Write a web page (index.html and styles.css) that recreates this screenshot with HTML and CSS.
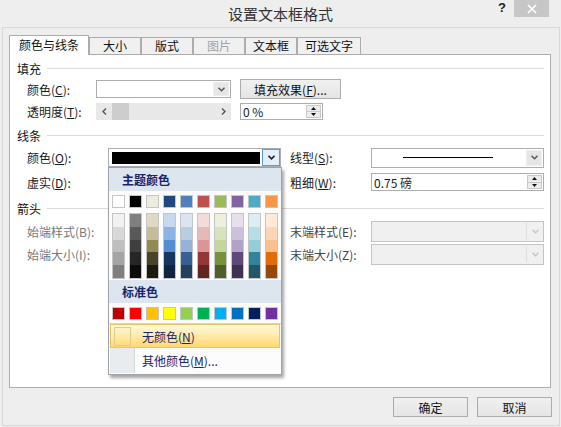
FILE: index.html
```html
<!DOCTYPE html>
<html lang="zh-CN">
<head>
    <meta charset="UTF-8">
    <title>设置文本框格式</title>
    <link rel="stylesheet" href="styles.css">
</head>
<body>
    <div class="titlebar">
        <div class="title">设置文本框格式</div>
        <div class="caption-btns">
            <span class="help">?</span>
            <span class="close">
                <svg width="10" height="10" viewBox="0 0 10 10"><path d="M1 1 L9 9 M9 1 L1 9" stroke="#fff" stroke-width="1.6"/></svg>
            </span>
        </div>
    </div>

    <div class="frame">
        <div class="tabs">
            <div class="tab active">颜色与线条</div>
            <div class="tab">大小</div>
            <div class="tab">版式</div>
            <div class="tab disabled">图片</div>
            <div class="tab">文本框</div>
            <div class="tab">可选文字</div>
        </div>

        <div class="panel">
            <div class="sec"><span>填充</span><i></i></div>
            <div class="row r1">
                <span class="lbl narrow">颜色(<u>C</u>):</span>
                <div class="combo fill-color">
                    <span class="val"></span>
                    <span class="drop"><svg width="7" height="5" viewBox="0 0 7 5"><path d="M0.5 0.8 L3.5 3.8 L6.5 0.8" fill="none" stroke="#555" stroke-width="1.5"/></svg></span>
                </div>
                <button class="btn fx">填充效果(<u>F</u>)...</button>
            </div>
            <div class="row r2">
                <span class="lbl narrow">透明度(<u>T</u>):</span>
                <div class="scroll">
                    <span class="arr"><svg width="5" height="7" viewBox="0 0 5 7"><path d="M4 0.5 L1 3.5 L4 6.5" fill="none" stroke="#555" stroke-width="1.4"/></svg></span>
                    <span class="thumb"></span>
                    <span class="track"></span>
                    <span class="arr"><svg width="5" height="7" viewBox="0 0 5 7"><path d="M1 0.5 L4 3.5 L1 6.5" fill="none" stroke="#555" stroke-width="1.4"/></svg></span>
                </div>
                <div class="spin pct">
                    <span class="val">0 %</span>
                    <span class="spin-btns">
                        <span><svg width="5" height="3" viewBox="0 0 5 3"><path d="M0 3 L2.5 0 L5 3Z" fill="#111"/></svg></span>
                        <span><svg width="5" height="3" viewBox="0 0 5 3"><path d="M0 0 L2.5 3 L5 0Z" fill="#111"/></svg></span>
                    </span>
                </div>
            </div>

            <div class="sec s2"><span>线条</span><i></i></div>
            <div class="row r3">
                <span class="lbl wide">颜色(<u>O</u>):</span>
                <div class="color-field">
                    <div class="combo line-color">
                        <span class="val"><b class="black"></b></span>
                        <span class="drop active"><svg width="7" height="5" viewBox="0 0 7 5"><path d="M0.5 0.8 L3.5 3.8 L6.5 0.8" fill="none" stroke="#222" stroke-width="1.6"/></svg></span>
                    </div>
                    <div class="popup">
                        <div class="pop-head">主题颜色</div>
                        <div class="swatches" id="theme-row"></div>
                        <div class="shades" id="theme-shades"></div>
                        <div class="pop-head std">标准色</div>
                        <div class="swatches std-row" id="std-row"></div>
                        <div class="pop-sep"></div>
                        <div class="pop-item hover"><span class="no-color"></span><span>无颜色(<u>N</u>)</span></div>
                        <div class="pop-item more"><span class="strip"></span><span>其他颜色(<u>M</u>)...</span></div>
                    </div>
                </div>
                <span class="lbl wide gap">线型(<u>S</u>):</span>
                <div class="combo line-style">
                    <span class="val"><b class="stroke"></b></span>
                    <span class="drop"><svg width="7" height="5" viewBox="0 0 7 5"><path d="M0.5 0.8 L3.5 3.8 L6.5 0.8" fill="none" stroke="#555" stroke-width="1.5"/></svg></span>
                </div>
            </div>
            <div class="row r4">
                <span class="lbl wide">虚实(<u>D</u>):</span>
                <div class="combo std-w"><span class="val"></span><span class="drop"></span></div>
                <span class="lbl wide gap">粗细(<u>W</u>):</span>
                <div class="spin std-w">
                    <span class="val">0.75 磅</span>
                    <span class="spin-btns">
                        <span><svg width="5" height="3" viewBox="0 0 5 3"><path d="M0 3 L2.5 0 L5 3Z" fill="#111"/></svg></span>
                        <span><svg width="5" height="3" viewBox="0 0 5 3"><path d="M0 0 L2.5 3 L5 0Z" fill="#111"/></svg></span>
                    </span>
                </div>
            </div>

            <div class="sec s3"><span>箭头</span><i></i></div>
            <div class="row r5">
                <span class="lbl wide off">始端样式(B):</span>
                <div class="combo std-w disabled"><span class="val"></span><span class="drop"></span></div>
                <span class="lbl wide gap off2">末端样式(E):</span>
                <div class="combo std-w disabled">
                    <span class="val"></span>
                    <span class="drop"><svg width="7" height="5" viewBox="0 0 7 5"><path d="M0.5 0.8 L3.5 3.8 L6.5 0.8" fill="none" stroke="#c4c4c4" stroke-width="1.4"/></svg></span>
                </div>
            </div>
            <div class="row r6">
                <span class="lbl wide off">始端大小(I):</span>
                <div class="combo std-w disabled"><span class="val"></span><span class="drop"></span></div>
                <span class="lbl wide gap off2">末端大小(Z):</span>
                <div class="combo std-w disabled">
                    <span class="val"></span>
                    <span class="drop"><svg width="7" height="5" viewBox="0 0 7 5"><path d="M0.5 0.8 L3.5 3.8 L6.5 0.8" fill="none" stroke="#c4c4c4" stroke-width="1.4"/></svg></span>
                </div>
            </div>
        </div>

        <div class="actions">
            <button class="btn">确定</button>
            <button class="btn">取消</button>
        </div>
    </div>

    <script>
        (function() {
            // base colour, then its five tints/shades
            var theme = [
                ['#ffffff', '#f2f2f2', '#d8d8d8', '#bfbfbf', '#a5a5a5', '#7f7f7f'],
                ['#000000', '#7f7f7f', '#595959', '#3f3f3f', '#262626', '#0c0c0c'],
                ['#eeece1', '#ddd9c3', '#c4bd97', '#938953', '#494429', '#1d1b10'],
                ['#1f497d', '#c6d9f0', '#8db3e2', '#548dd4', '#17365d', '#0f243e'],
                ['#4f81bd', '#dbe5f1', '#b8cce4', '#95b3d7', '#366092', '#244061'],
                ['#c0504d', '#f2dcdb', '#e5b9b7', '#d99694', '#953734', '#632423'],
                ['#9bbb59', '#ebf1dd', '#d7e3bc', '#c3d69b', '#76923c', '#4f6128'],
                ['#8064a2', '#e5e0ec', '#ccc1d9', '#b2a2c7', '#5f497a', '#3f3151'],
                ['#4bacc6', '#dbeef3', '#b7dde8', '#92cddc', '#31859b', '#205867'],
                ['#f79646', '#fdeada', '#fbd5b5', '#fac08f', '#e36c09', '#974806']
            ];
            var std = ['#c00000', '#ff0000', '#ffc000', '#ffff00', '#92d050',
                       '#00b050', '#00b0f0', '#0070c0', '#002060', '#7030a0'];

            var row = document.getElementById('theme-row');
            var shades = document.getElementById('theme-shades');
            var stdRow = document.getElementById('std-row');

            theme.forEach(function(c) {
                var sw = document.createElement('span');
                sw.className = 'sw';
                sw.style.background = c[0];
                row.appendChild(sw);

                var col = document.createElement('span');
                col.className = 'shade-col';
                for (var i = 1; i < c.length; i++) {
                    var cell = document.createElement('span');
                    cell.style.background = c[i];
                    col.appendChild(cell);
                }
                shades.appendChild(col);
            });

            std.forEach(function(c) {
                var sw = document.createElement('span');
                sw.className = 'sw';
                sw.style.background = c;
                stdRow.appendChild(sw);
            });
        })();
    </script>
</body>
</html>
```

FILE: styles.css
```css
* {
    margin: 0;
    padding: 0;
    box-sizing: border-box;
}

body {
    width: 561px;
    height: 427px;
    overflow: hidden;
    background: #eeeeee;
    font-family: "Noto Sans CJK SC", "Noto Sans", sans-serif;
    font-size: 12px;
    color: #1a1a1a;
}

u {
    text-decoration: underline;
    text-underline-offset: 1px;
}

/* title bar */
.titlebar {
    height: 27px;
    display: grid;
    grid-template-columns: 1fr auto 1fr;
}

.title {
    grid-column: 2;
    font-size: 15px;
    line-height: 27px;
    color: #333;
}

.caption-btns {
    grid-column: 3;
    display: flex;
    justify-content: flex-end;
    align-items: flex-start;
    padding-right: 12px;
}

.help {
    font-family: "Liberation Sans", sans-serif;
    font-weight: bold;
    font-size: 13px;
    line-height: 15px;
    margin-right: 8px;
    color: #222;
}

.close {
    width: 35px;
    height: 17px;
    background: #c7c7c7;
    display: flex;
    align-items: center;
    justify-content: center;
}

/* dialog body */
.frame {
    margin-left: 2px;
    width: 558px;
    height: 399px;
    border: 1px solid #d9d9d9;
    padding: 7px 0 0 6px;
}

.tabs {
    display: flex;
    align-items: flex-end;
    height: 19px;
    position: relative;
    z-index: 1;
}

.tab {
    height: 17px;
    min-width: 52px;
    padding: 0 7px;
    border: 1px solid #acacac;
    border-bottom: none;
    background: #f0f0f0;
    line-height: 15px;
    text-align: center;
    color: #111;
}

.tab + .tab {
    margin-left: 0;
}

.tab.active {
    height: 20px;
    padding: 0 9px;
    line-height: 18px;
    background: #fff;
    margin-bottom: -1px;
}

.tab.disabled {
    color: #a3a3a3;
}

.panel {
    width: 542px;
    height: 334px;
    border: 1px solid #acacac;
    background: #fff;
    padding: 5px 6px 0 7px;
}

.sec {
    display: flex;
    align-items: center;
    height: 16px;
    color: #111;
}

.sec i {
    flex: 1;
    height: 1px;
    background: #dcdcdc;
    margin-left: 6px;
}

.s2 { margin-top: 7px; }
.s3 { margin-top: 9px; }

.row {
    display: flex;
    align-items: center;
    padding-left: 10px;
}

.r1 { height: 20px; margin-top: 3px; }
.r2 { height: 17px; margin-top: 4px; }
.r3 { height: 19px; margin-top: 5px; }
.r4 { height: 18px; margin-top: 6px; }
.r5 { height: 21px; margin-top: 5px; }
.r6 { height: 21px; margin-top: 2px; }

.lbl {
    white-space: nowrap;
}

.narrow { width: 69px; }
.wide { width: 81px; }
.gap { margin-left: 9px; }
.off { color: #777; }
.off2 { color: #444; }

/* controls */
.combo {
    display: flex;
    height: 100%;
    border: 1px solid #abadb3;
    background: #fff;
}

.combo .val {
    flex: 1;
    display: flex;
    align-items: center;
}

.drop {
    width: 16px;
    margin: 1px;
    display: flex;
    align-items: center;
    justify-content: center;
    background: #e6e6e6;
    border: 1px solid #eeeeee;
}

.drop.active {
    background: #e3effb;
    border-color: #569de5;
    margin: 0;
    width: 18px;
}

.fill-color { width: 135px; height: 18px; }
.std-w { width: 173px; }

.combo.disabled {
    background: #f0f0f0;
    border-color: #c4c4c4;
}

.combo.disabled .drop {
    background: #f0f0f0;
    border: none;
    border-left: 1px solid #dedede;
    margin: 1px 0;
    width: 17px;
}

.color-field {
    position: relative;
    width: 173px;
    height: 100%;
}

.line-color {
    width: 173px;
}

.black {
    display: block;
    width: 148px;
    height: 12px;
    margin-left: 3px;
    background: #000;
}

.line-style {
    width: 173px;
    height: 20px;
}

.stroke {
    display: block;
    width: 90px;
    height: 1px;
    margin-left: 31px;
    background: #000;
}

.btn {
    font-family: inherit;
    font-size: 12px;
    color: #111;
    width: 75px;
    height: 20px;
    border: 1px solid #acacac;
    background: linear-gradient(#f0f0f0, #e5e5e5);
}

.fx {
    width: 101px;
    margin-left: 9px;
}

.scroll {
    width: 135px;
    height: 17px;
    display: flex;
    align-items: center;
    background: #e8e8e8;
}

.scroll .arr {
    width: 16px;
    display: flex;
    justify-content: center;
}

.scroll .thumb {
    width: 17px;
    height: 100%;
    background: #cdcdcd;
}

.scroll .track {
    flex: 1;
}

.spin {
    display: flex;
    height: 100%;
    border: 1px solid #abadb3;
    background: #fff;
}

.spin .val {
    flex: 1;
    padding-left: 2px;
    display: flex;
    align-items: center;
}

.pct {
    width: 83px;
    margin-left: 9px;
}

.spin-btns {
    width: 15px;
    margin: 1px;
    display: flex;
    flex-direction: column;
}

.spin-btns span {
    flex: 1;
    display: flex;
    align-items: center;
    justify-content: center;
    background: #ececec;
    border: 1px solid #c9c9c9;
}

.spin-btns span + span {
    border-top: none;
}

/* colour drop-down */
.popup {
    position: absolute;
    top: 100%;
    left: 0;
    width: 174px;
    height: 208px;
    background: #fcfcfc;
    border: 1px solid #9ea3a8;
    box-shadow: 2px 3px 3px rgba(0, 0, 0, 0.35);
    z-index: 5;
}

.pop-head {
    height: 23px;
    line-height: 23px;
    padding-left: 13px;
    background: #dde6ee;
    color: #15246b;
    font-weight: bold;
}

.pop-head.std {
    margin-top: 1px;
}

.swatches,
.shades {
    display: flex;
    gap: 4px;
    padding-left: 3px;
}

.swatches {
    height: 13px;
    margin-top: 4px;
}

.shades {
    margin-top: 5px;
}

.sw {
    width: 13px;
    height: 13px;
    border: 1px solid #c5c5c5;
}

.shade-col {
    width: 13px;
    height: 66px;
    border: 1px solid #c5c5c5;
    display: flex;
    flex-direction: column;
}

.shade-col span {
    flex: 1;
}

.pop-sep {
    height: 1px;
    margin-top: 3px;
    background: #d4d4d4;
}

.pop-item {
    height: 24px;
    display: flex;
    align-items: center;
    color: #15246b;
}

.pop-item.hover {
    margin: 0 1px;
    border: 1px solid #e7c467;
    background: linear-gradient(#fff8dc, #ffeaa8 50%, #ffd970);
}

.no-color {
    width: 17px;
    height: 19px;
    margin: 0 11px 0 3px;
    border: 1px solid #dccb98;
}

.pop-item.more {
    height: 25px;
}

.strip {
    width: 25px;
    align-self: stretch;
    margin: 0 7px 0 1px;
    background: #e8ecee;
    border-right: 1px solid #d3d8db;
}

.actions {
    display: flex;
    justify-content: flex-end;
    gap: 9px;
    margin-top: 9px;
    padding-right: 7px;
}
```
